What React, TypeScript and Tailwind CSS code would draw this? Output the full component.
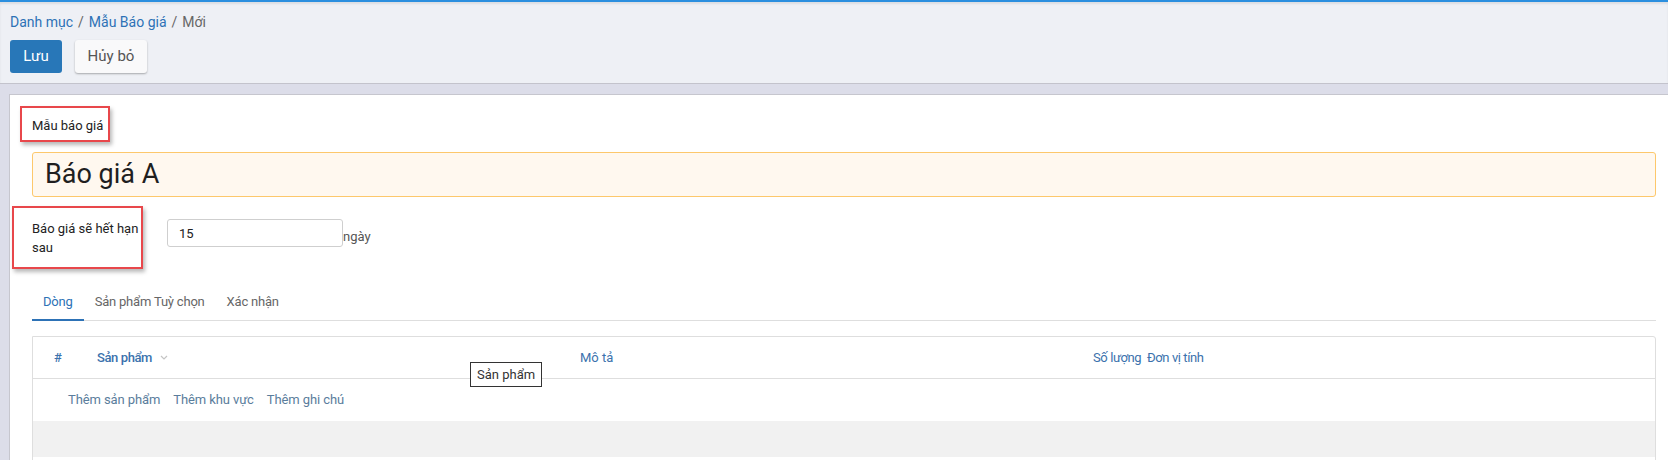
import { useState } from "react";

const tabs = ["Dòng", "Sản phẩm Tuỳ chọn", "Xác nhận"];

const Breadcrumb = () => (
  <div className="flex items-center text-[14px] leading-5 gap-[5px]">
    <a className="text-[#2d72b6]">Danh mục</a>
    <span className="text-[#666]">/</span>
    <a className="text-[#2d72b6]">Mẫu Báo giá</a>
    <span className="text-[#666]">/</span>
    <span className="text-[#666]">Mới</span>
  </div>
);

const RedMark = ({ className }: { className: string }) => (
  <div
    className={
      "absolute border-2 border-[#e8474b] shadow-[2px_3px_4px_rgba(0,0,0,0.28)] pointer-events-none " +
      className
    }
  />
);

export default function App() {
  const [active, setActive] = useState(0);
  const [days, setDays] = useState("15");

  return (
    <div className="w-[1668px] h-[460px] overflow-hidden bg-[#dcdde9] font-['Roboto',sans-serif]">
      <div className="h-[2px] bg-[#2b8fdf]" />
      {/* control panel */}
      <div className="h-[82px] bg-[#eef0f5] border-b border-[#c3c3cc] pl-[10px] pt-[10px] shadow-[inset_0_2px_2px_rgba(0,0,0,0.08)]">
        <Breadcrumb />
        <div className="flex gap-[13px] mt-[8px]">
          <button className="h-[33px] w-[52px] rounded-[3px] bg-[#2877b8] text-white text-[15px]">
            Lưu
          </button>
          <button className="h-[33px] w-[72px] rounded-[3px] bg-[#f9f9fa] text-[#555] text-[15px] shadow-[0_1px_2px_rgba(0,0,0,0.3)]">
            Hủy bỏ
          </button>
        </div>
      </div>

      {/* sheet */}
      <div className="pl-[9px] pt-[10px]">
        <div className="relative bg-white border-l border-t border-[#c6c6ce] pl-[22px] pr-[12px] pt-[22px] h-[400px] text-[13px] text-[#222]">
          <div className="relative w-fit leading-[18px]">
            Mẫu báo giá
            <RedMark className="-left-[12px] -top-[11px] w-[90px] h-[36px]" />
          </div>

          <div className="mt-[17px] h-[45px] rounded-[3px] border border-[#fdc86c] bg-[#fff8ef] flex items-center pl-[12px] text-[27px] text-[#1f1f1f]">
            Báo giá A
          </div>

          <div className="flex items-start mt-[22px]">
            <div className="w-[135px]">
              <div className="relative w-[110px] leading-[19px]">
                Báo giá sẽ hết hạn sau
                <RedMark className="-left-[20px] -top-[13px] w-[131px] h-[63px]" />
              </div>
            </div>
            <div className="flex items-end">
              <input
                value={days}
                onChange={(e) => setDays(e.target.value)}
                className="w-[176px] h-[28px] rounded-[3px] border border-[#cfcfcf] px-[11px] text-[13px] text-[#222] outline-none"
              />
              <span className="text-[#555] leading-[18px] mb-[1px]">ngày</span>
            </div>
          </div>

          {/* tabs */}
          <div className="flex mt-[27px] border-b border-[#dedede]">
            {tabs.map((t, i) => (
              <div
                key={t}
                onClick={() => setActive(i)}
                className={
                  "px-[11px] pt-[9px] pb-[8px] leading-[18px] -mb-px cursor-pointer border-b-2 tracking-[-0.2px] " +
                  (i === active
                    ? "border-[#2d72b6] text-[#2d72b6]"
                    : "border-transparent text-[#666]")
                }
              >
                {t}
              </div>
            ))}
          </div>

          {/* table */}
          <div className="relative mt-[15px] border border-[#dedede] rounded-tr-[3px]">
            <div className="flex items-center h-[42px] border-b border-[#dedede] text-[#3b72ad]">
              <div className="w-[64px] pl-[21px] font-medium">#</div>
              <div className="w-[483px] flex items-center font-medium tracking-[-0.4px]">
                Sản phẩm
                <svg width="8" height="5" viewBox="0 0 8 5" className="ml-[8px]">
                  <path d="M1 1 L4 4 L7 1" fill="none" stroke="#c4c4c4" strokeWidth="1.2" />
                </svg>
              </div>
              <div className="w-[513px]">Mô tả</div>
              <div className="tracking-[-0.4px]">Số lượng&nbsp; Đơn vị tính</div>
            </div>
            <div className="flex items-center h-[42px] pl-[35px] gap-[13px] text-[#5a7d9c] tracking-[-0.1px]">
              <a>Thêm sản phẩm</a>
              <a>Thêm khu vực</a>
              <a>Thêm ghi chú</a>
            </div>
            <div className="h-[36px] bg-[#f1f1f1]" />
            <div className="h-[20px]" />

            <div className="absolute left-[437px] top-[25px] h-[25px] px-[6px] flex items-center border border-[#333] bg-white text-[#333] text-[13px]">
              Sản phẩm
            </div>
          </div>
        </div>
      </div>
    </div>
  );
}
